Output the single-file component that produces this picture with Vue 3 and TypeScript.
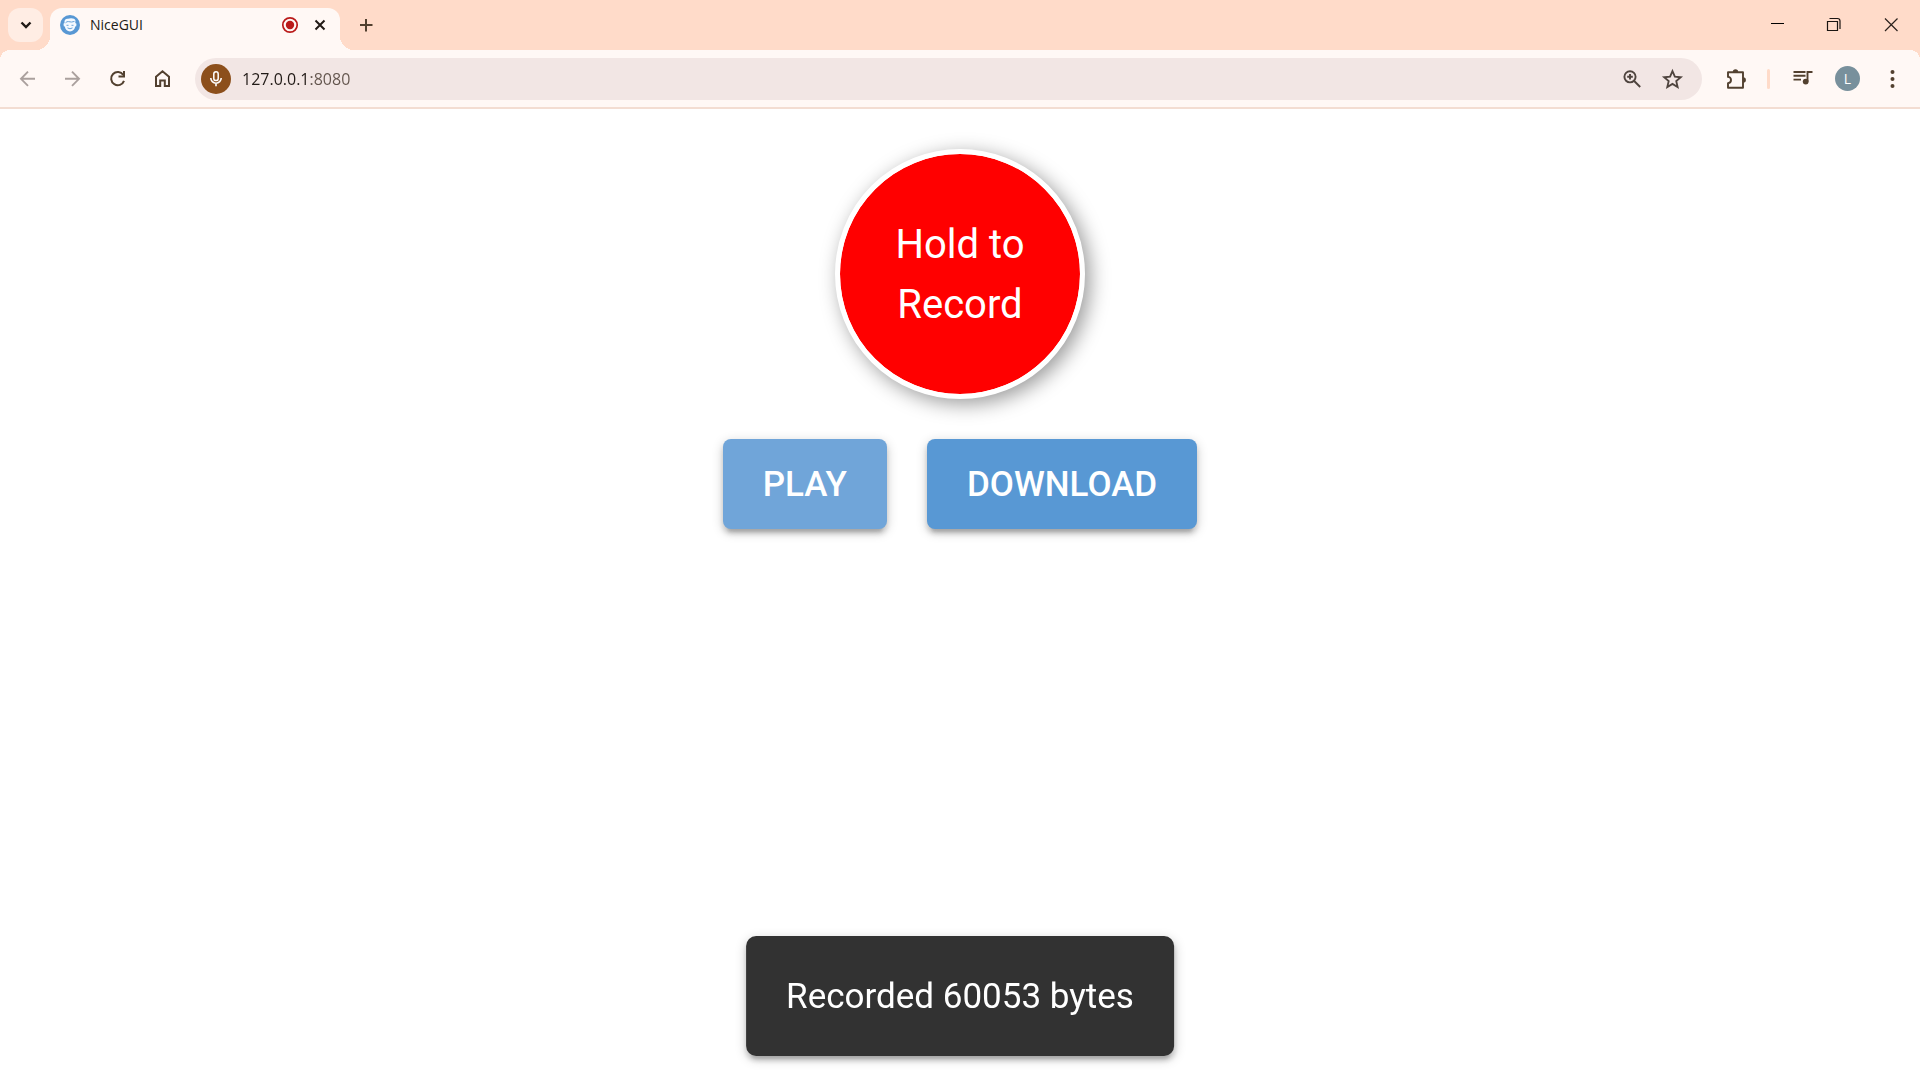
<script setup lang="ts">
import { ref } from 'vue'

const address = ref('127.0.0.1:8080')
const recordedBytes = ref(60053)
</script>

<template>
  <div class="window">
    <header class="tab-strip">
      <button class="tab-search" type="button" aria-label="Search tabs">
        <svg width="35" height="34" viewBox="0 0 35 34"><path d="M13.500 14.500l4.500 4.500 4.500-4.500" fill="none" stroke="#211a16" stroke-width="2.400" /></svg>
      </button>
      <div class="tab">
        <svg class="favicon" width="20" height="20" viewBox="0 0 20 20">
          <circle cx="10" cy="10" r="10" fill="#5898d4" />
          <path d="M4.500 8C4 4.500 6 3.500 8 3.800 10 2.800 15 2.800 15.500 5.500L15.300 8l1.200.8-.3 2.400-1 .4C14.800 14.500 12.800 16.500 10 16.500S5.200 14.500 4.800 11.600l-1-.4L3.500 8.800z" fill="#f4f9ff" />
          <path d="M5.500 7.800q1.500-1.600 3-1.200 3 1 6-.2M6.500 10.300h2M11.500 10.300h2M7.500 12.900q2.500 1.800 5 0" fill="none" stroke="#5898d4" stroke-width=".9" />
        </svg>
        <span class="tab-title">NiceGUI</span>
        <svg class="recording" width="18" height="18" viewBox="0 0 18 18">
          <circle cx="9" cy="9" r="7.200" fill="none" stroke="#ba1a1a" stroke-width="1.700" />
          <circle cx="9" cy="9" r="4.200" fill="#ba1a1a" />
        </svg>
        <button class="tab-close" type="button" aria-label="Close tab">
          <svg width="20" height="20" viewBox="0 0 20 20"><path d="M5.500 5.500l9 9M14.500 5.500l-9 9" stroke="#211a16" stroke-width="2" /></svg>
        </button>
      </div>
      <button class="new-tab" type="button" aria-label="New tab">
        <svg width="20" height="20" viewBox="0 0 20 20"><path d="M10 4v12.500M4 10h12.500" stroke="#52402f" stroke-width="2" /></svg>
      </button>
      <div class="window-controls">
        <button type="button" aria-label="Minimize">
          <svg width="20" height="20" viewBox="0 0 20 20"><path d="M3 8.500h13" stroke="#000" /></svg>
        </button>
        <button type="button" aria-label="Restore">
          <svg width="20" height="20" viewBox="0 0 20 20"><path d="M2.500 6.500h10v9h-10zM4.500 3.500h8q2.500 0 2.500 2.500v8" fill="none" stroke="#1b1512" stroke-width="1.200" /></svg>
        </button>
        <button type="button" aria-label="Close">
          <svg width="20" height="20" viewBox="0 0 20 20"><path d="M3 3.500l12.500 12.500M15.500 3.500L3 16" stroke="#2b211c" stroke-width="1.200" /></svg>
        </button>
      </div>
    </header>

    <nav class="toolbar">
      <button class="nav-button" type="button" aria-label="Back" disabled>
        <svg width="20" height="20" viewBox="0 0 20 20"><path d="M17 9.800H3.500M10 2.700L3 9.800l7 7.100" fill="none" stroke="#aaa09d" stroke-width="1.900" /></svg>
      </button>
      <button class="nav-button" type="button" aria-label="Forward" disabled>
        <svg width="20" height="20" viewBox="0 0 20 20"><path d="M2 9.800h13.500M9 2.700l7 7.100-7 7.100" fill="none" stroke="#aaa09d" stroke-width="1.900" /></svg>
      </button>
      <button class="nav-button" type="button" aria-label="Reload">
        <svg width="20" height="20" viewBox="0 0 20 20"><path d="M16 11.800A6.600 6.600 0 1 1 15.300 6" fill="none" stroke="#52402f" stroke-width="2" /><path d="M17 2v6.500h-6.500v-2H15V2z" fill="#52402f" /></svg>
      </button>
      <button class="nav-button" type="button" aria-label="Home">
        <svg width="20" height="20" viewBox="0 0 20 20"><path d="M3 7.800l6.500-5.600 6.500 5.600v9.200h-4.200v-5.500H7.200V17H3z" fill="none" stroke="#52402f" stroke-width="2" /></svg>
      </button>

      <div class="omnibox">
        <button class="mic" type="button" aria-label="Microphone in use">
          <svg width="20" height="20" viewBox="0 0 20 20"><rect x="7.800" y="2.800" width="4.400" height="8.800" rx="2.200" fill="none" stroke="#fff" stroke-width="1.500" /><path d="M4.800 9a5.200 5.200 0 0 0 10.400 0M10 14.200v3" fill="none" stroke="#fff" stroke-width="1.600" /></svg>
        </button>
        <input v-model="address" class="address" type="text" aria-label="Address" spellcheck="false">
        <button class="tool" type="button" aria-label="Zoom">
          <svg width="20" height="20" viewBox="0 0 20 20"><circle cx="8" cy="7.800" r="5.600" fill="none" stroke="#4f443e" stroke-width="1.900" /><path d="M12.200 12l6 6M8 5v5.600M5.200 7.800h5.600" stroke="#4f443e" stroke-width="1.900" /></svg>
        </button>
        <button class="tool" type="button" aria-label="Bookmark this tab">
          <svg width="24" height="24" viewBox="0 0 26 26"><path d="M13.500 4.500l2.600 6 6.400.6-4.900 4.200 1.500 6.400-5.600-3.400-5.600 3.400 1.500-6.400-4.900-4.200 6.400-.6z" fill="none" stroke="#4f443e" stroke-width="2" /></svg>
        </button>
      </div>

      <button class="tool" type="button" aria-label="Extensions">
        <svg width="22" height="22" viewBox="0 0 22 22">
          <path d="M3 4.200h15v15.500H3v-4.600q3-.2 3-3.100t-3-3.100z" fill="none" stroke="#52402f" stroke-width="1.900" stroke-linejoin="round" />
          <path d="M7.800 4a2.700 2.700 0 0 1 5.400 0zM18.200 9.300a2.700 2.700 0 0 1 0 5.400z" fill="#52402f" />
        </svg>
      </button>
      <span class="divider"></span>
      <button class="tool" type="button" aria-label="Media controls">
        <svg width="22" height="22" viewBox="0 0 22 22"><path d="M1.500 4h12M1.500 7.800h12M1.500 11.600H9M15.500 13.600V4h5" fill="none" stroke="#52402f" stroke-width="1.900" /><circle cx="13.700" cy="13.600" r="2.900" fill="#52402f" /></svg>
      </button>
      <button class="avatar" type="button" aria-label="Profile">L</button>
      <button class="tool" type="button" aria-label="Menu">
        <svg width="22" height="22" viewBox="0 0 22 22" fill="#52402f"><circle cx="11.500" cy="4" r="2" /><circle cx="11.500" cy="11" r="2" /><circle cx="11.500" cy="18" r="2" /></svg>
      </button>
    </nav>

    <main class="page">
      <button class="record" type="button">Hold to Record</button>
      <div class="actions">
        <button class="action hovered" type="button">PLAY</button>
        <button class="action" type="button">DOWNLOAD</button>
      </div>
    </main>

    <div class="toast" role="status">Recorded {{ recordedBytes }} bytes</div>
  </div>
</template>

<style>
body {
  margin: 0;
  background: #fff;
}
</style>

<style scoped>
.window {
  display: flex;
  flex-direction: column;
  min-height: 100vh;
  font-family: "Open Sans", "Noto Sans", sans-serif;
}

button {
  display: flex;
  align-items: center;
  justify-content: center;
  flex: none;
  margin: 0;
  padding: 0;
  border: 0;
  background: none;
  font-family: inherit;
}

svg {
  display: block;
  flex: none;
}

.tab-strip {
  display: flex;
  height: 50px;
  padding-left: 8px;
  background: #ffdbc9;
}

.tab-search {
  width: 35px;
  height: 34px;
  margin: 8px 7px 0 0;
  border-radius: 12px;
  background: #ffede4;
}

.tab {
  position: relative;
  display: flex;
  align-items: center;
  box-sizing: border-box;
  width: 290px;
  height: 42px;
  margin-top: 8px;
  padding: 0 10px 8px;
  border-radius: 12px 12px 0 0;
  background: #fff8f5;
}

.tab::before,
.tab::after {
  content: "";
  position: absolute;
  bottom: 0;
  width: 14px;
  height: 14px;
}

.tab::before {
  right: 100%;
  background: radial-gradient(circle at 0 0, transparent 14px, #fff8f5 14px);
}

.tab::after {
  left: 100%;
  background: radial-gradient(circle at 100% 0, transparent 14px, #fff8f5 14px);
}

.tab-title {
  flex: 1;
  margin-left: 10px;
  color: #211a16;
  font-size: 14px;
  line-height: 20px;
}

.recording {
  margin-right: 11px;
}

.new-tab {
  width: 32px;
  height: 50px;
  margin-left: 10px;
}

.window-controls {
  display: flex;
  margin-left: auto;
}

.window-controls button {
  width: 57px;
}

.toolbar {
  position: relative;
  display: flex;
  align-items: center;
  height: 57px;
  padding: 0 8px 0 5px;
  border-bottom: 2px solid #f3ddd2;
  background: #fff8f5;
}

.toolbar::before,
.toolbar::after {
  content: "";
  position: absolute;
  top: 0;
  width: 10px;
  height: 10px;
}

.toolbar::before {
  left: 0;
  background: radial-gradient(circle at 100% 100%, transparent 10px, #ffdbc9 10px);
}

.toolbar::after {
  right: 0;
  background: radial-gradient(circle at 0 100%, transparent 10px, #ffdbc9 10px);
}

.nav-button {
  width: 45px;
  height: 40px;
}

.omnibox {
  display: flex;
  flex: 1;
  align-items: center;
  box-sizing: border-box;
  min-width: 0;
  height: 42px;
  margin: 0 14px 0 10px;
  padding: 0 10px 0 6px;
  border-radius: 21px;
  background: #f2e6e4;
}

.mic {
  width: 30px;
  height: 30px;
  border-radius: 50%;
  background: #8c4f1b;
}

.address {
  flex: 1;
  min-width: 0;
  height: 30px;
  margin-left: 11px;
  padding: 0;
  border: 0;
  outline: 0;
  background: linear-gradient(90deg, #211a16 69px, #62544c 69px);
  -webkit-background-clip: text;
  background-clip: text;
  color: #211a16;
  -webkit-text-fill-color: transparent;
  font-family: inherit;
  font-size: 16px;
}

.tool {
  width: 40px;
  height: 40px;
}

.divider {
  width: 3px;
  height: 20px;
  margin: 0 13px 0 11px;
  border-radius: 2px;
  background: #ffdbc9;
}

.avatar {
  width: 25px;
  height: 25px;
  margin: 0 12px;
  border-radius: 50%;
  background: #78909c;
  color: #fff;
  font-size: 14px;
}

.page {
  display: flex;
  flex: 1;
  flex-direction: column;
  align-items: center;
  gap: 40px;
  padding: 40px;
  font-family: Roboto, sans-serif;
}

.record {
  box-sizing: border-box;
  width: 250px;
  height: 250px;
  padding: 2px 40px 0;
  border: 5px solid #fff;
  border-radius: 50%;
  background: #f00 padding-box;
  box-shadow: 5px 5px 20px rgba(0, 0, 0, 0.4);
  color: #fff;
  font-size: 40px;
  line-height: 60px;
}

.actions {
  display: flex;
  gap: 40px;
}

.action {
  height: 90px;
  padding: 0 40px;
  border-radius: 8px;
  background: #5898d4;
  box-shadow: 0 3px 12px rgba(0, 0, 0, 0.2), 0 5px 5px rgba(0, 0, 0, 0.14), 0 8px 3px -5px rgba(0, 0, 0, 0.12);
  color: #fff;
  font-size: 35px;
  font-weight: 500;
}

.hovered {
  background: #70a5d9;
}

.toast {
  position: fixed;
  bottom: 24px;
  left: 50%;
  box-sizing: border-box;
  height: 120px;
  padding: 0 40px;
  border-radius: 10px;
  background: #323232;
  box-shadow: 0 3px 12px rgba(0, 0, 0, 0.2), 0 5px 5px rgba(0, 0, 0, 0.14), 0 8px 3px -5px rgba(0, 0, 0, 0.12);
  color: #fff;
  font-family: Roboto, sans-serif;
  font-size: 35px;
  line-height: 122px;
  white-space: nowrap;
  transform: translateX(-50%);
}
</style>
